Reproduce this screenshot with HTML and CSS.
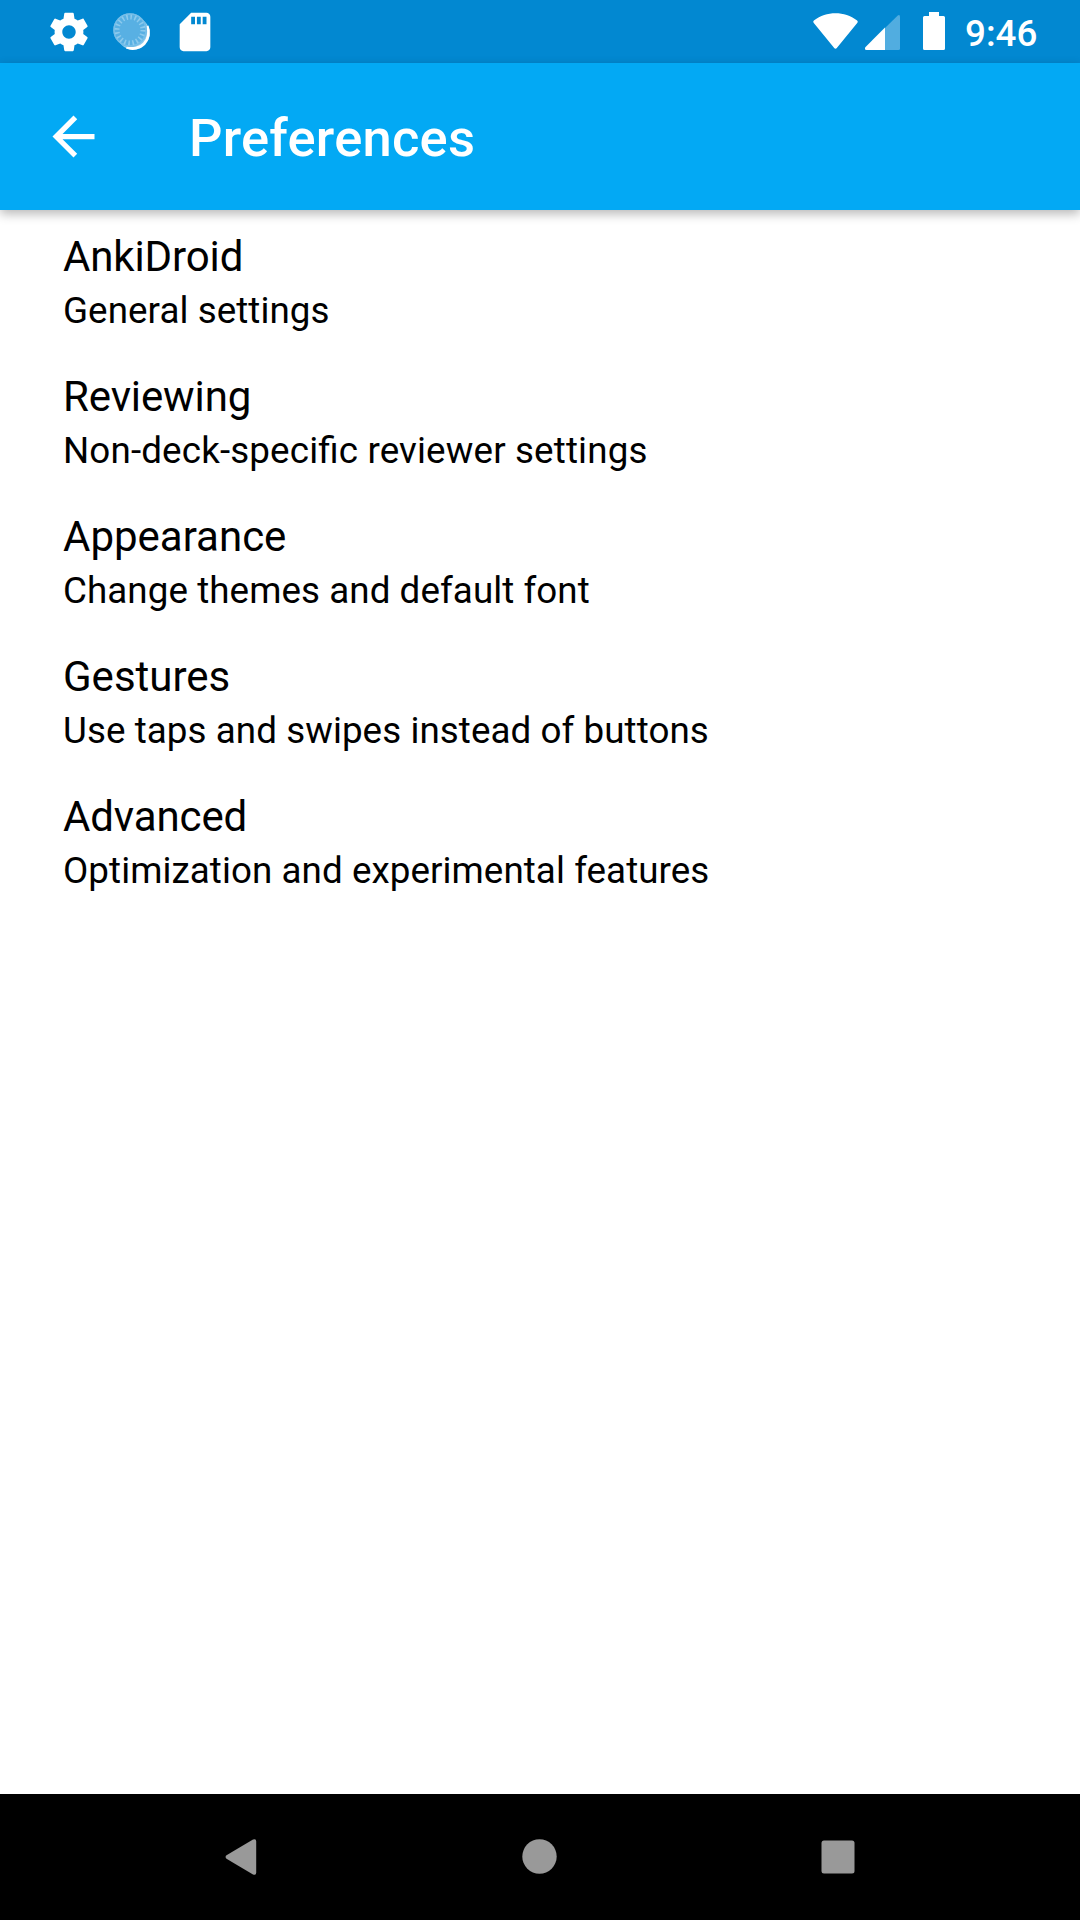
FILE: index.html
```html
<!DOCTYPE html>
<html lang="en">
<head>
<meta charset="utf-8">
<title>Preferences</title>
<link rel="stylesheet" href="styles.css">
</head>
<body>
<div class="screen">
  <div class="status-bar">
    <div class="notifications">
      <svg class="notification" viewBox="0 0 24 24"><path fill="#fff" d="M19.430 12.980c.04-.32.07-.64.07-.98s-.03-.66-.07-.98l2.110-1.650c.19-.15.24-.42.12-.64l-2-3.460c-.12-.22-.39-.3-.61-.22l-2.490 1c-.52-.4-1.080-.73-1.690-.98l-.38-2.650C14.460 2.180 14.250 2 14 2h-4c-.25 0-.46.18-.49.42l-.38 2.650c-.61.25-1.170.59-1.690.98l-2.490-1c-.23-.09-.49 0-.61.22l-2 3.460c-.13.22-.07.49.12.64l2.110 1.650c-.04.32-.07.65-.07.98s.03.66.07.98l-2.110 1.650c-.19.15-.24.42-.12.64l2 3.460c.12.22.39.3.61.22l2.490-1c.52.4 1.080.73 1.690.98l.38 2.650c.03.24.24.42.49.42h4c.25 0 .46-.18.49-.42l.38-2.650c.61-.25 1.170-.59 1.690-.98l2.490 1c.23.09.49 0 .61-.22l2-3.460c.12-.22.07-.49-.12-.64l-2.110-1.650zM12 15.500c-1.930 0-3.500-1.570-3.500-3.500s1.570-3.500 3.500-3.500 3.500 1.570 3.500 3.500-1.570 3.500-3.500 3.500z"/></svg>
      <svg class="notification" viewBox="0 0 46 46">
        <circle cx="24.300" cy="24.300" r="16.500" fill="#8dcaec"/>
        <path d="M38.200 17A16 16 0 0 1 17.500 38.300" fill="none" stroke="#fff" stroke-width="2.800"/>
        <circle cx="21" cy="21" r="16.700" fill="#58b0e3"/>
        <circle cx="21" cy="21" r="16" fill="none" stroke="#76bee8" stroke-width="1.500"/>
        <circle cx="21" cy="21" r="13" fill="none" stroke="#8ccaed" stroke-width="5" stroke-dasharray="1.600 2.484"/>
      </svg>
      <svg class="notification" viewBox="0 0 24 24"><path fill="#fff" d="M18 2h-8L4.020 8 4 20c0 1.100.9 2 2 2h12c1.100 0 2-.9 2-2V4c0-1.100-.9-2-2-2zm-6 6h-2V4h2v4zm3 0h-2V4h2v4zm3 0h-2V4h2v4z"/></svg>
    </div>
    <div class="system">
      <svg class="wifi" viewBox="0 0 45 36"><path fill="#fff" d="M.8 10Q-.5 8.500 1.200 7.200C13-2.200 32-2.200 43.800 7.200Q45.500 8.500 44.200 10L24 34.800Q22.500 36.500 21 34.800Z"/></svg>
      <svg class="signal" viewBox="0 0 35 35"><path fill="#51ade0" d="M20 13L32.500.7Q35-1 35 2V33.500Q35 35 33.500 35H20Z"/><path fill="#fff" d="M20 12.500V35H1.500Q-.8 35 .3 32.300Z"/></svg>
      <svg class="battery" viewBox="0 0 22 38"><path fill="#fff" d="M6 0H16V4H20.500Q22 4 22 5.500V36.500Q22 38 20.500 38H1.500Q0 38 0 36.500V5.500Q0 4 1.500 4H6Z"/></svg>
      <span class="clock">9:46</span>
    </div>
  </div>
  <header class="app-bar">
    <svg class="back" viewBox="0 0 24 24"><path fill="#fff" d="M20 11H7.830l5.590-5.590L12 4l-8 8 8 8 1.410-1.410L7.830 13H20v-2z"/></svg>
    <h1 class="title">Preferences</h1>
  </header>
  <main class="preferences">
    <div class="item"><div class="name name-tight">AnkiDroid</div><div class="summary">General settings</div></div>
    <div class="item"><div class="name name-tight">Reviewing</div><div class="summary summary-wide">Non-deck-specific reviewer settings</div></div>
    <div class="item"><div class="name">Appearance</div><div class="summary">Change themes and default font</div></div>
    <div class="item"><div class="name">Gestures</div><div class="summary">Use taps and swipes instead of buttons</div></div>
    <div class="item"><div class="name name-tight">Advanced</div><div class="summary">Optimization and experimental features</div></div>
  </main>
  <nav class="nav-bar">
    <svg class="nav-icon" viewBox="0 0 40 40"><path fill="#999" d="M4.500 21.700Q2.600 20 4.500 18.300L31 2.600Q34.200 1.200 34.200 4.500V35.500Q34.200 38.800 31 37.400Z"/></svg>
    <svg class="nav-icon" viewBox="0 0 40 40"><circle cx="19.500" cy="19.500" r="17.200" fill="#999"/></svg>
    <svg class="nav-icon" viewBox="0 0 40 40"><rect x="3.500" y="3.500" width="33" height="33" rx="2.500" fill="#999"/></svg>
  </nav>
</div>
</body>
</html>
```
FILE: styles.css
```css
* { box-sizing: border-box; }

body {
  margin: 0;
  background: #fff;
  font-family: Roboto, "Liberation Sans", sans-serif;
}

.screen {
  display: flex;
  flex-direction: column;
  width: 1080px;
  height: 1920px;
}

.status-bar {
  display: flex;
  justify-content: space-between;
  height: 63px;
  padding: 0 42px 0 45.500px;
  background: #0288d1;
}

.notifications {
  display: flex;
  align-items: center;
  gap: 17px;
}

.notification {
  width: 46px;
  height: 46px;
}

.system {
  display: flex;
  align-items: flex-start;
}

.wifi {
  width: 45px;
  height: 36px;
  margin: 13px 7.500px 0 0;
}

.signal {
  width: 35px;
  height: 35px;
  margin: 15px 23px 0 0;
}

.battery {
  width: 22px;
  height: 38px;
  margin: 12px 20px 0 0;
}

.clock {
  width: 73px;
  margin-top: 12px;
  color: #fff;
  font-size: 36.750px;
  font-weight: 500;
  line-height: 43px;
}

.app-bar {
  position: relative;
  display: flex;
  align-items: center;
  height: 147px;
  padding-left: 42px;
  background: #03a9f4;
  box-shadow: 0 4px 10px rgba(0, 0, 0, 0.28);
}

.back {
  width: 63px;
  height: 63px;
}

.title {
  margin: 0 0 0 84px;
  padding-top: 3px;
  color: #fff;
  font-size: 52.500px;
  font-weight: 500;
  letter-spacing: 0.22px;
  line-height: 62px;
}

.preferences {
  flex: 1;
  color: #000;
}

.item {
  height: 140px;
  padding: 22px 63px 0;
}

.name {
  font-size: 42px;
  line-height: 49px;
}

.name-tight {
  letter-spacing: -0.12px;
}

.summary {
  margin-top: 8px;
  font-size: 36.750px;
  font-feature-settings: "liga" 1;
  letter-spacing: 0.07px;
  line-height: 43px;
}

.summary-wide {
  letter-spacing: 0.15px;
}

.nav-bar {
  display: flex;
  align-items: center;
  justify-content: center;
  gap: 258px;
  height: 126px;
  background: #000;
}

.nav-icon {
  width: 40px;
  height: 40px;
}
```
